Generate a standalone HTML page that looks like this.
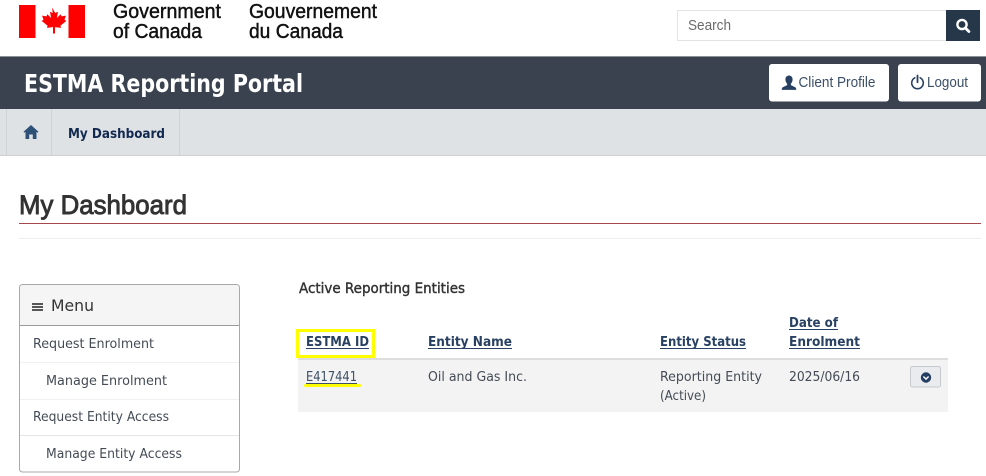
<!DOCTYPE html>
<html lang="en">
<head>
<meta charset="utf-8">
<title>ESTMA Reporting Portal</title>
<style>
html,body{margin:0;padding:0;background:#fff;width:986px;height:476px;overflow:hidden}
svg{display:block}
.b{font-family:"DejaVu Sans",sans-serif;font-size:13.500px;fill:#444b55}
.h{font-family:"DejaVu Sans",sans-serif;font-size:13.500px;font-weight:700;fill:#284162}
.g{font-family:"Liberation Sans",sans-serif;font-size:20.500px;fill:#111;stroke:#111;stroke-width:.45px}
.l{font-family:"Liberation Sans",sans-serif;font-size:15px;fill:#3b4f68}
</style>
</head>
<body>
<svg width="986" height="476" viewBox="0 0 986 476" xmlns="http://www.w3.org/2000/svg">
<rect width="986" height="476" fill="#fff"/>
<!-- flag -->
<rect x="19" y="5" width="16.500" height="33" fill="#f00"/>
<rect x="68.500" y="5" width="16.500" height="33" fill="#f00"/>
<path fill="#f00" d="M52 7.500l3.200 5.500 2.800-1.300-1.100 6.300 3.700-3.700 1 2.100 4.300-.8-1.400 4.300 1.900 1-6 4.800.7 2.200-6.100-.8v6.400h-2v-6.400l-6.100.8.700-2.200-6-4.800 1.900-1-1.400-4.300 4.300.8 1-2.100 3.700 3.700-1.100-6.300 2.800 1.300z"/>
<text class="g" x="113" y="18" textLength="108" lengthAdjust="spacingAndGlyphs">Government</text>
<text class="g" x="113" y="38" textLength="89" lengthAdjust="spacingAndGlyphs">of Canada</text>
<text class="g" x="249" y="18" textLength="128" lengthAdjust="spacingAndGlyphs">Gouvernement</text>
<text class="g" x="249" y="38" textLength="94" lengthAdjust="spacingAndGlyphs">du Canada</text>
<!-- search -->
<rect x="677.500" y="10.500" width="269" height="30" fill="#fff" stroke="#e3e3e3"/>
<text class="l" x="688" y="30" style="fill:#6b6b6b" textLength="43" lengthAdjust="spacingAndGlyphs">Search</text>
<rect x="946" y="10" width="34" height="31" fill="#26374a"/>
<circle cx="962" cy="24.500" r="4.600" fill="none" stroke="#fff" stroke-width="2.400"/>
<path d="M965.400 28l3.500 3.500" stroke="#fff" stroke-width="2.800" stroke-linecap="round"/>
<!-- band -->
<rect x="0" y="56" width="986" height="53" fill="#3a4250"/>
<rect x="0" y="56" width="986" height="1" fill="#8d9299"/>
<text x="24" y="92" font-family="DejaVu Sans,sans-serif" font-size="24.500" font-weight="700" fill="#fff" textLength="279" lengthAdjust="spacingAndGlyphs">ESTMA Reporting Portal</text>
<rect x="769" y="64" width="120" height="37.500" rx="3" fill="#fff"/>
<path fill="#284162" d="M789 75.500c-2.400 0-3.600 1.900-3.600 4 0 1.800.8 3.300 1.700 4.200v1.400l-4.300 2.200c-.7.400-1 1-1 1.700v.9h14.400v-.9c0-.7-.3-1.300-1-1.700l-4.300-2.200v-1.400c.9-.9 1.700-2.400 1.700-4.200 0-2.100-1.200-4-3.600-4z"/>
<text class="l" x="798.500" y="87" textLength="77" lengthAdjust="spacingAndGlyphs">Client Profile</text>
<rect x="898" y="64" width="83" height="37.500" rx="3" fill="#fff"/>
<path d="M914.800 77.800a5.800 5.800 0 1 0 5.400 0" fill="none" stroke="#284162" stroke-width="1.600" stroke-linecap="round"/>
<path d="M917.500 75.500v6.800" stroke="#284162" stroke-width="1.800" stroke-linecap="round"/>
<text class="l" x="927" y="87" textLength="41" lengthAdjust="spacingAndGlyphs">Logout</text>
<!-- nav -->
<rect x="0" y="109" width="986" height="46" fill="#dfe2e5"/>
<rect x="0" y="155" width="986" height="1" fill="#ced1d4"/>
<rect x="6" y="109" width="1" height="46" fill="#d0d3d6"/>
<rect x="51" y="109" width="1" height="46" fill="#d0d3d6"/>
<rect x="179" y="109" width="1" height="46" fill="#d0d3d6"/>
<path fill="#2e5076" d="M31 125l7.500 6.800-.9 1-1.100-1V139h-3.700v-4.500h-3.600V139h-3.700v-7.200l-1.100 1-.9-1z"/>
<text class="h" x="68" y="138" style="fill:#12294f" textLength="97" lengthAdjust="spacingAndGlyphs">My Dashboard</text>
<!-- heading -->
<text x="19" y="214" font-family="Liberation Sans,sans-serif" font-size="27" fill="#333" stroke="#333" stroke-width=".9" textLength="168" lengthAdjust="spacingAndGlyphs">My Dashboard</text>
<rect x="19" y="223" width="962" height="1" fill="#a5484d"/>
<rect x="19" y="238" width="962" height="1" fill="#eeeeee"/>
<!-- menu -->
<rect x="19.500" y="284.500" width="220" height="187.500" rx="3" fill="#fff" stroke="#a8a8a8"/>
<path d="M20 325V288a3 3 0 0 1 3-3H236a3 3 0 0 1 3 3V325z" fill="#f5f5f5"/>
<rect x="20" y="325" width="219" height="1" fill="#9a9a9a"/>
<path d="M32 304h11M32 307h11M32 310h11" stroke="#222" stroke-width="1.600"/>
<text x="51" y="311" font-family="DejaVu Sans,sans-serif" font-size="16" fill="#333" textLength="43" lengthAdjust="spacingAndGlyphs">Menu</text>
<text class="b" x="33" y="348" textLength="121" lengthAdjust="spacingAndGlyphs">Request Enrolment</text>
<rect x="20" y="362" width="219" height="1" fill="#f1f1f1"/>
<text class="b" x="46" y="385" textLength="121" lengthAdjust="spacingAndGlyphs">Manage Enrolment</text>
<rect x="20" y="399" width="219" height="1" fill="#f1f1f1"/>
<text class="b" x="33" y="421" textLength="136" lengthAdjust="spacingAndGlyphs">Request Entity Access</text>
<rect x="20" y="435" width="219" height="1" fill="#e6e6e6"/>
<text class="b" x="46" y="458" textLength="136" lengthAdjust="spacingAndGlyphs">Manage Entity Access</text>
<!-- table -->
<text x="299" y="293" font-family="DejaVu Sans,sans-serif" font-size="14" fill="#333" stroke="#333" stroke-width=".4" textLength="166" lengthAdjust="spacingAndGlyphs">Active Reporting Entities</text>
<rect x="298" y="360" width="650" height="52" fill="#f3f3f3"/>
<rect x="298" y="358" width="650" height="2" fill="#dddddd"/>
<rect x="297.500" y="330.500" width="76" height="26" fill="none" stroke="#ffff00" stroke-width="3"/>
<text class="h" x="306" y="346" textLength="63" lengthAdjust="spacingAndGlyphs">ESTMA ID</text>
<rect x="306" y="348" width="63" height="1" fill="#284162"/>
<text class="h" x="428" y="346" textLength="84" lengthAdjust="spacingAndGlyphs">Entity Name</text>
<rect x="428" y="348" width="84" height="1" fill="#284162"/>
<text class="h" x="660" y="346" textLength="86" lengthAdjust="spacingAndGlyphs">Entity Status</text>
<rect x="660" y="348" width="86" height="1" fill="#284162"/>
<text class="h" x="789" y="327" textLength="49" lengthAdjust="spacingAndGlyphs">Date of</text>
<rect x="789" y="329" width="49" height="1" fill="#284162"/>
<text class="h" x="789" y="346" textLength="71" lengthAdjust="spacingAndGlyphs">Enrolment</text>
<rect x="789" y="348" width="71" height="1" fill="#284162"/>
<text class="b" x="306" y="381" style="fill:#3d4f66" textLength="51" lengthAdjust="spacingAndGlyphs">E417441</text>
<rect x="306" y="383" width="51" height="1" fill="#3d4f66"/>
<rect x="304" y="384" width="57" height="3" rx="1.500" fill="#ffff00"/>
<text class="b" x="428" y="381" textLength="99" lengthAdjust="spacingAndGlyphs">Oil and Gas Inc.</text>
<text class="b" x="660" y="381" textLength="102" lengthAdjust="spacingAndGlyphs">Reporting Entity</text>
<text class="b" x="660" y="400" textLength="46" lengthAdjust="spacingAndGlyphs">(Active)</text>
<text class="b" x="789" y="381" textLength="71" lengthAdjust="spacingAndGlyphs">2025/06/16</text>
<rect x="910.500" y="366.500" width="30" height="20.500" rx="2" fill="#e9ebee" stroke="#c6c9cd"/>
<circle cx="926" cy="377.500" r="5.200" fill="#233d63"/>
<path d="M923.400 376.500l2.600 2.600 2.600-2.600" fill="none" stroke="#fff" stroke-width="1.500"/>
</svg>
</body>
</html>
